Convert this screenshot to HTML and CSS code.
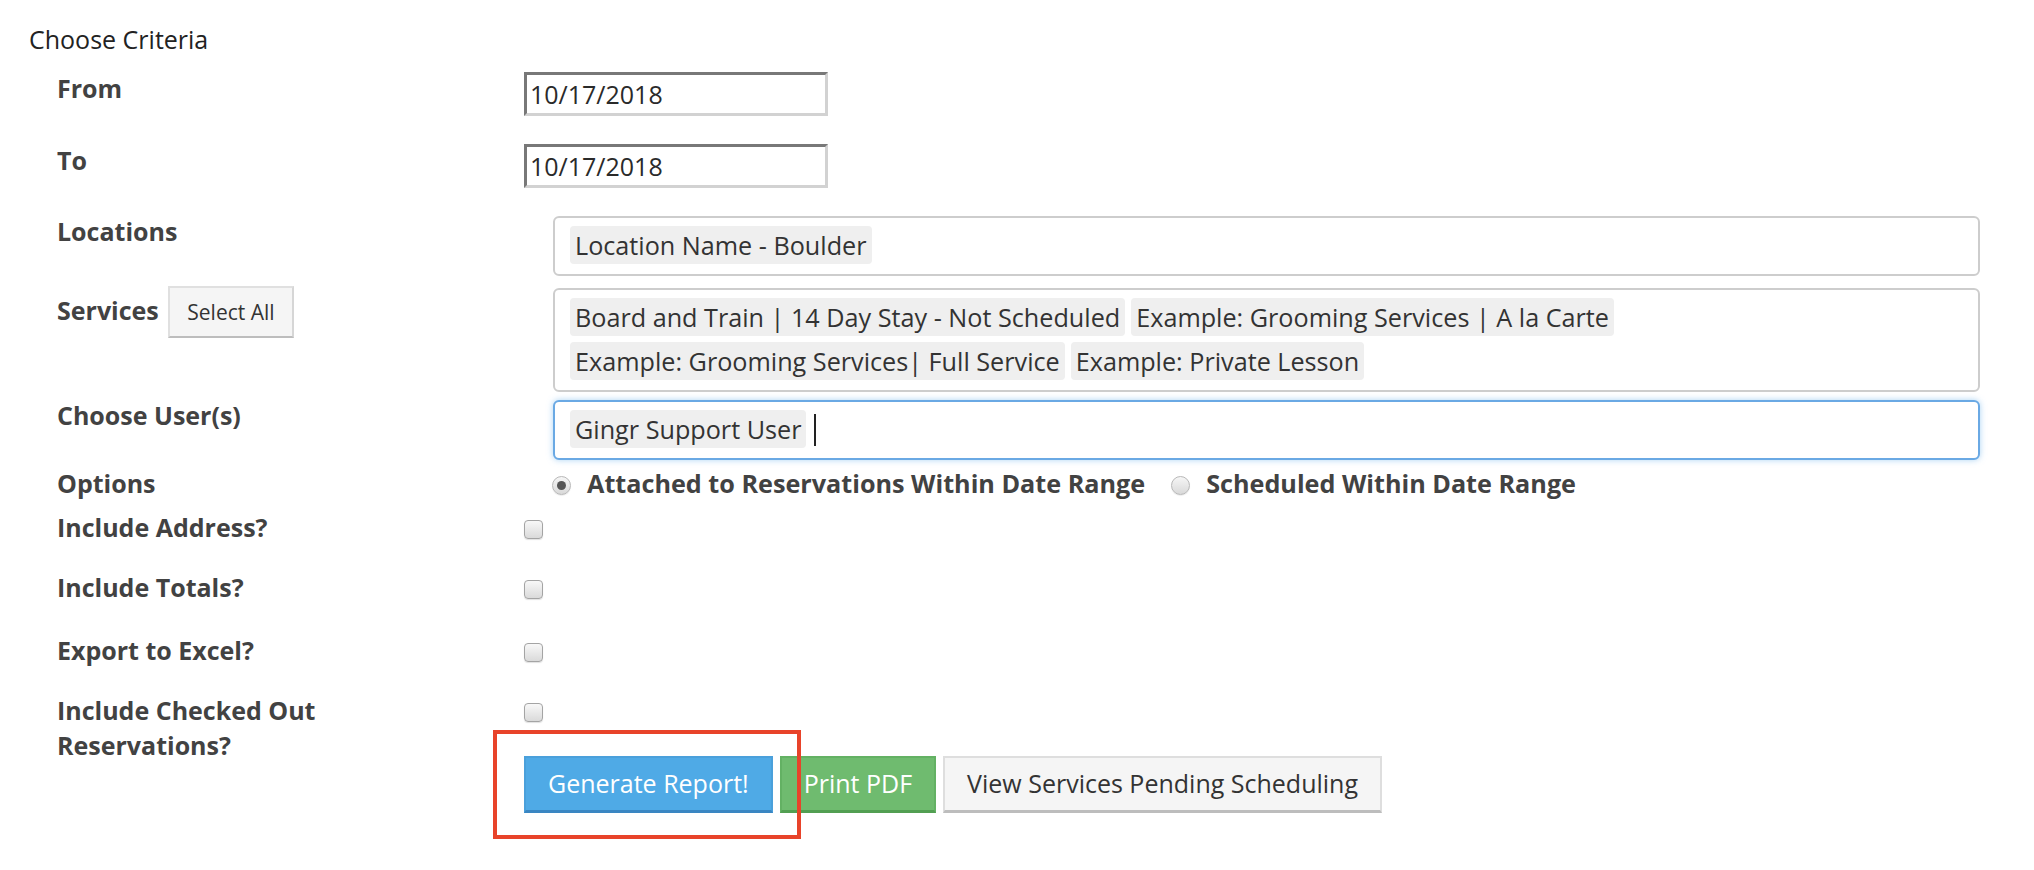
FILE: index.html
```html
<!DOCTYPE html>
<html lang="en">
<head>
  <meta charset="UTF-8" />
  <meta name="viewport" content="width=device-width, initial-scale=1.0" />
  <title>Reservations Report</title>
  <link rel="stylesheet" href="styles.css">
</head>
<body>
  <div class="report-criteria">
    <h4>Choose Criteria</h4>

    <div class="form-row row-date">
      <label for="from">From</label>
      <div class="field"><input type="text" id="from" class="date-input" value="10/17/2018" /></div>
    </div>

    <div class="form-row row-date">
      <label for="to">To</label>
      <div class="field"><input type="text" id="to" class="date-input" value="10/17/2018" /></div>
    </div>

    <div class="form-row row-locations">
      <label>Locations</label>
      <div class="field">
        <div class="select-box">
          <span class="tag">Location Name - Boulder</span>
        </div>
      </div>
    </div>

    <div class="form-row row-services">
      <label>Services <button class="btn-select-all">Select All</button></label>
      <div class="field">
        <div class="select-box">
          <span class="tag">Board and Train | 14 Day Stay - Not Scheduled</span>
          <span class="tag">Example: Grooming Services | A la Carte</span>
          <span class="tag">Example: Grooming Services| Full Service</span>
          <span class="tag">Example: Private Lesson</span>
        </div>
      </div>
    </div>

    <div class="form-row row-users">
      <label>Choose User(s)</label>
      <div class="field">
        <div class="select-box focused">
          <span class="tag">Gingr Support User</span>
          <span class="cursor"></span>
        </div>
      </div>
    </div>

    <div class="form-row row-options">
      <label>Options</label>
      <div class="field">
        <div class="radio-group">
          <label class="radio-option"><input type="radio" name="option" checked /> Attached to Reservations Within Date Range</label>
          <label class="radio-option"><input type="radio" name="option" /> Scheduled Within Date Range</label>
        </div>
      </div>
    </div>

    <div class="form-row row-check">
      <label for="address">Include Address?</label>
      <div class="field"><input type="checkbox" id="address" /></div>
    </div>

    <div class="form-row row-check row-totals">
      <label for="totals">Include Totals?</label>
      <div class="field"><input type="checkbox" id="totals" /></div>
    </div>

    <div class="form-row row-check">
      <label for="excel">Export to Excel?</label>
      <div class="field"><input type="checkbox" id="excel" /></div>
    </div>

    <div class="form-row">
      <label for="checkedout">Include Checked Out Reservations?</label>
      <div class="field">
        <input type="checkbox" id="checkedout" />
        <div class="actions">
          <button class="btn btn-primary">Generate Report!</button>
          <button class="btn btn-success">Print PDF</button>
          <button class="btn btn-default">View Services Pending Scheduling</button>
          <span class="highlight"></span>
        </div>
      </div>
    </div>
  </div>
</body>
</html>
```

FILE: styles.css
```css
body {
  margin: 0;
  font-family: "Open Sans", "Liberation Sans", sans-serif;
  font-size: 25px;
  line-height: 35.5px;
  color: #333;
  background: #fff;
}
.report-criteria {
  padding: 21px 54px 30px 29px;
}
.report-criteria h4 {
  margin: 0 0 13px;
  font-size: 25px;
  font-weight: 400;
  line-height: 37px;
  color: #222;
}
.form-row {
  display: grid;
  grid-template-columns: 467px 1fr;
  align-items: start;
  margin-left: 28px;
}
.form-row > label {
  font-weight: 700;
  color: #424242;
  max-width: 400px;
}
.row-date { margin-bottom: 26.5px; }
.row-locations { margin-bottom: 10px; }
.row-services { margin-bottom: 6px; }
.row-users { margin-bottom: 6px; }
.row-options { margin-bottom: 8px; }
.row-check { margin-bottom: 24.5px; }
.row-totals { margin-bottom: 27.5px; }

.date-input {
  display: block;
  box-sizing: border-box;
  width: 304px;
  height: 44px;
  margin: 1px 0 0;
  padding: 0 3px;
  border: 3px solid;
  border-color: #787878 #d2d2d2 #d2d2d2 #787878;
  font: inherit;
  color: #2a2a2a;
  background: #fff;
}

.btn-select-all {
  margin-left: 3px;
  padding: 9px 17px;
  font-family: inherit;
  font-size: 21px;
  font-weight: 400;
  line-height: 30px;
  color: #333;
  background: #f5f5f5;
  border: 2px solid;
  border-color: #e0e0e0 #d6d6d6 #bdbdbd #e0e0e0;
}

.select-box {
  display: flex;
  flex-wrap: wrap;
  align-items: flex-start;
  margin: 2px 0 0 29px;
  padding: 8px 15px 4px;
  border: 2px solid #cdcdcd;
  border-radius: 6px;
  background: #fff;
}
.select-box.focused {
  border-color: #6aa9e4;
  box-shadow: 0 0 6px rgba(102, 175, 233, 0.55);
}
.tag {
  margin: 0 6px 6px 0;
  padding: 0 5px;
  font-size: 25.2px;
  line-height: 38px;
  border-radius: 4px;
  background: #efefef;
  color: #333;
  white-space: nowrap;
}
.cursor {
  width: 2px;
  height: 32px;
  margin: 4px 0 0 2px;
  background: #222;
}

.radio-group {
  display: flex;
  margin-left: 28px;
  font-size: 25.2px;
  font-weight: 700;
  color: #424242;
}
.radio-option {
  display: flex;
  align-items: center;
}
.radio-option + .radio-option {
  margin-left: 26px;
}
input[type="radio"] {
  appearance: none;
  position: relative;
  width: 19px;
  height: 19px;
  margin: 4px 16px 0 0;
  border: 1px solid #b8b8b8;
  border-radius: 50%;
  background: linear-gradient(#f6f6f6, #d9d9d9);
  box-shadow: 0 1px 1px rgba(0, 0, 0, 0.08);
}
input[type="radio"]:checked::after {
  content: "";
  position: absolute;
  left: 4px;
  top: 4px;
  width: 9px;
  height: 9px;
  border-radius: 50%;
  background: #555;
}

input[type="checkbox"] {
  appearance: none;
  display: block;
  width: 19px;
  height: 19px;
  margin: 10px 0 0;
  border: 1px solid #a4a4a4;
  border-radius: 4px;
  background: linear-gradient(#f8f8f8, #dadada);
  box-shadow: 0 1px 1px rgba(0, 0, 0, 0.12);
}

.actions {
  position: relative;
  display: flex;
  gap: 7px;
  margin-top: 34px;
}
.btn {
  padding: 8px 22px 9px;
  font-family: inherit;
  font-size: 25px;
  font-weight: 400;
  line-height: 35px;
  border-style: solid;
  border-width: 2px 2px 3px;
  border-radius: 0;
  cursor: pointer;
}
.btn-primary {
  color: #fff;
  background: #4faae6;
  border-color: #4aa0db #4aa0db #3a86c2;
}
.btn-success {
  color: #fff;
  background: #6fbb6f;
  border-color: #63b163 #63b163 #529f52;
}
.btn-default {
  color: #333;
  background: #f5f5f5;
  border-color: #dedede #dedede #bdbdbd;
}
.highlight {
  position: absolute;
  left: -31px;
  top: -26px;
  width: 308px;
  height: 109px;
  box-sizing: border-box;
  border: 4px solid #e8432a;
  pointer-events: none;
}
```
